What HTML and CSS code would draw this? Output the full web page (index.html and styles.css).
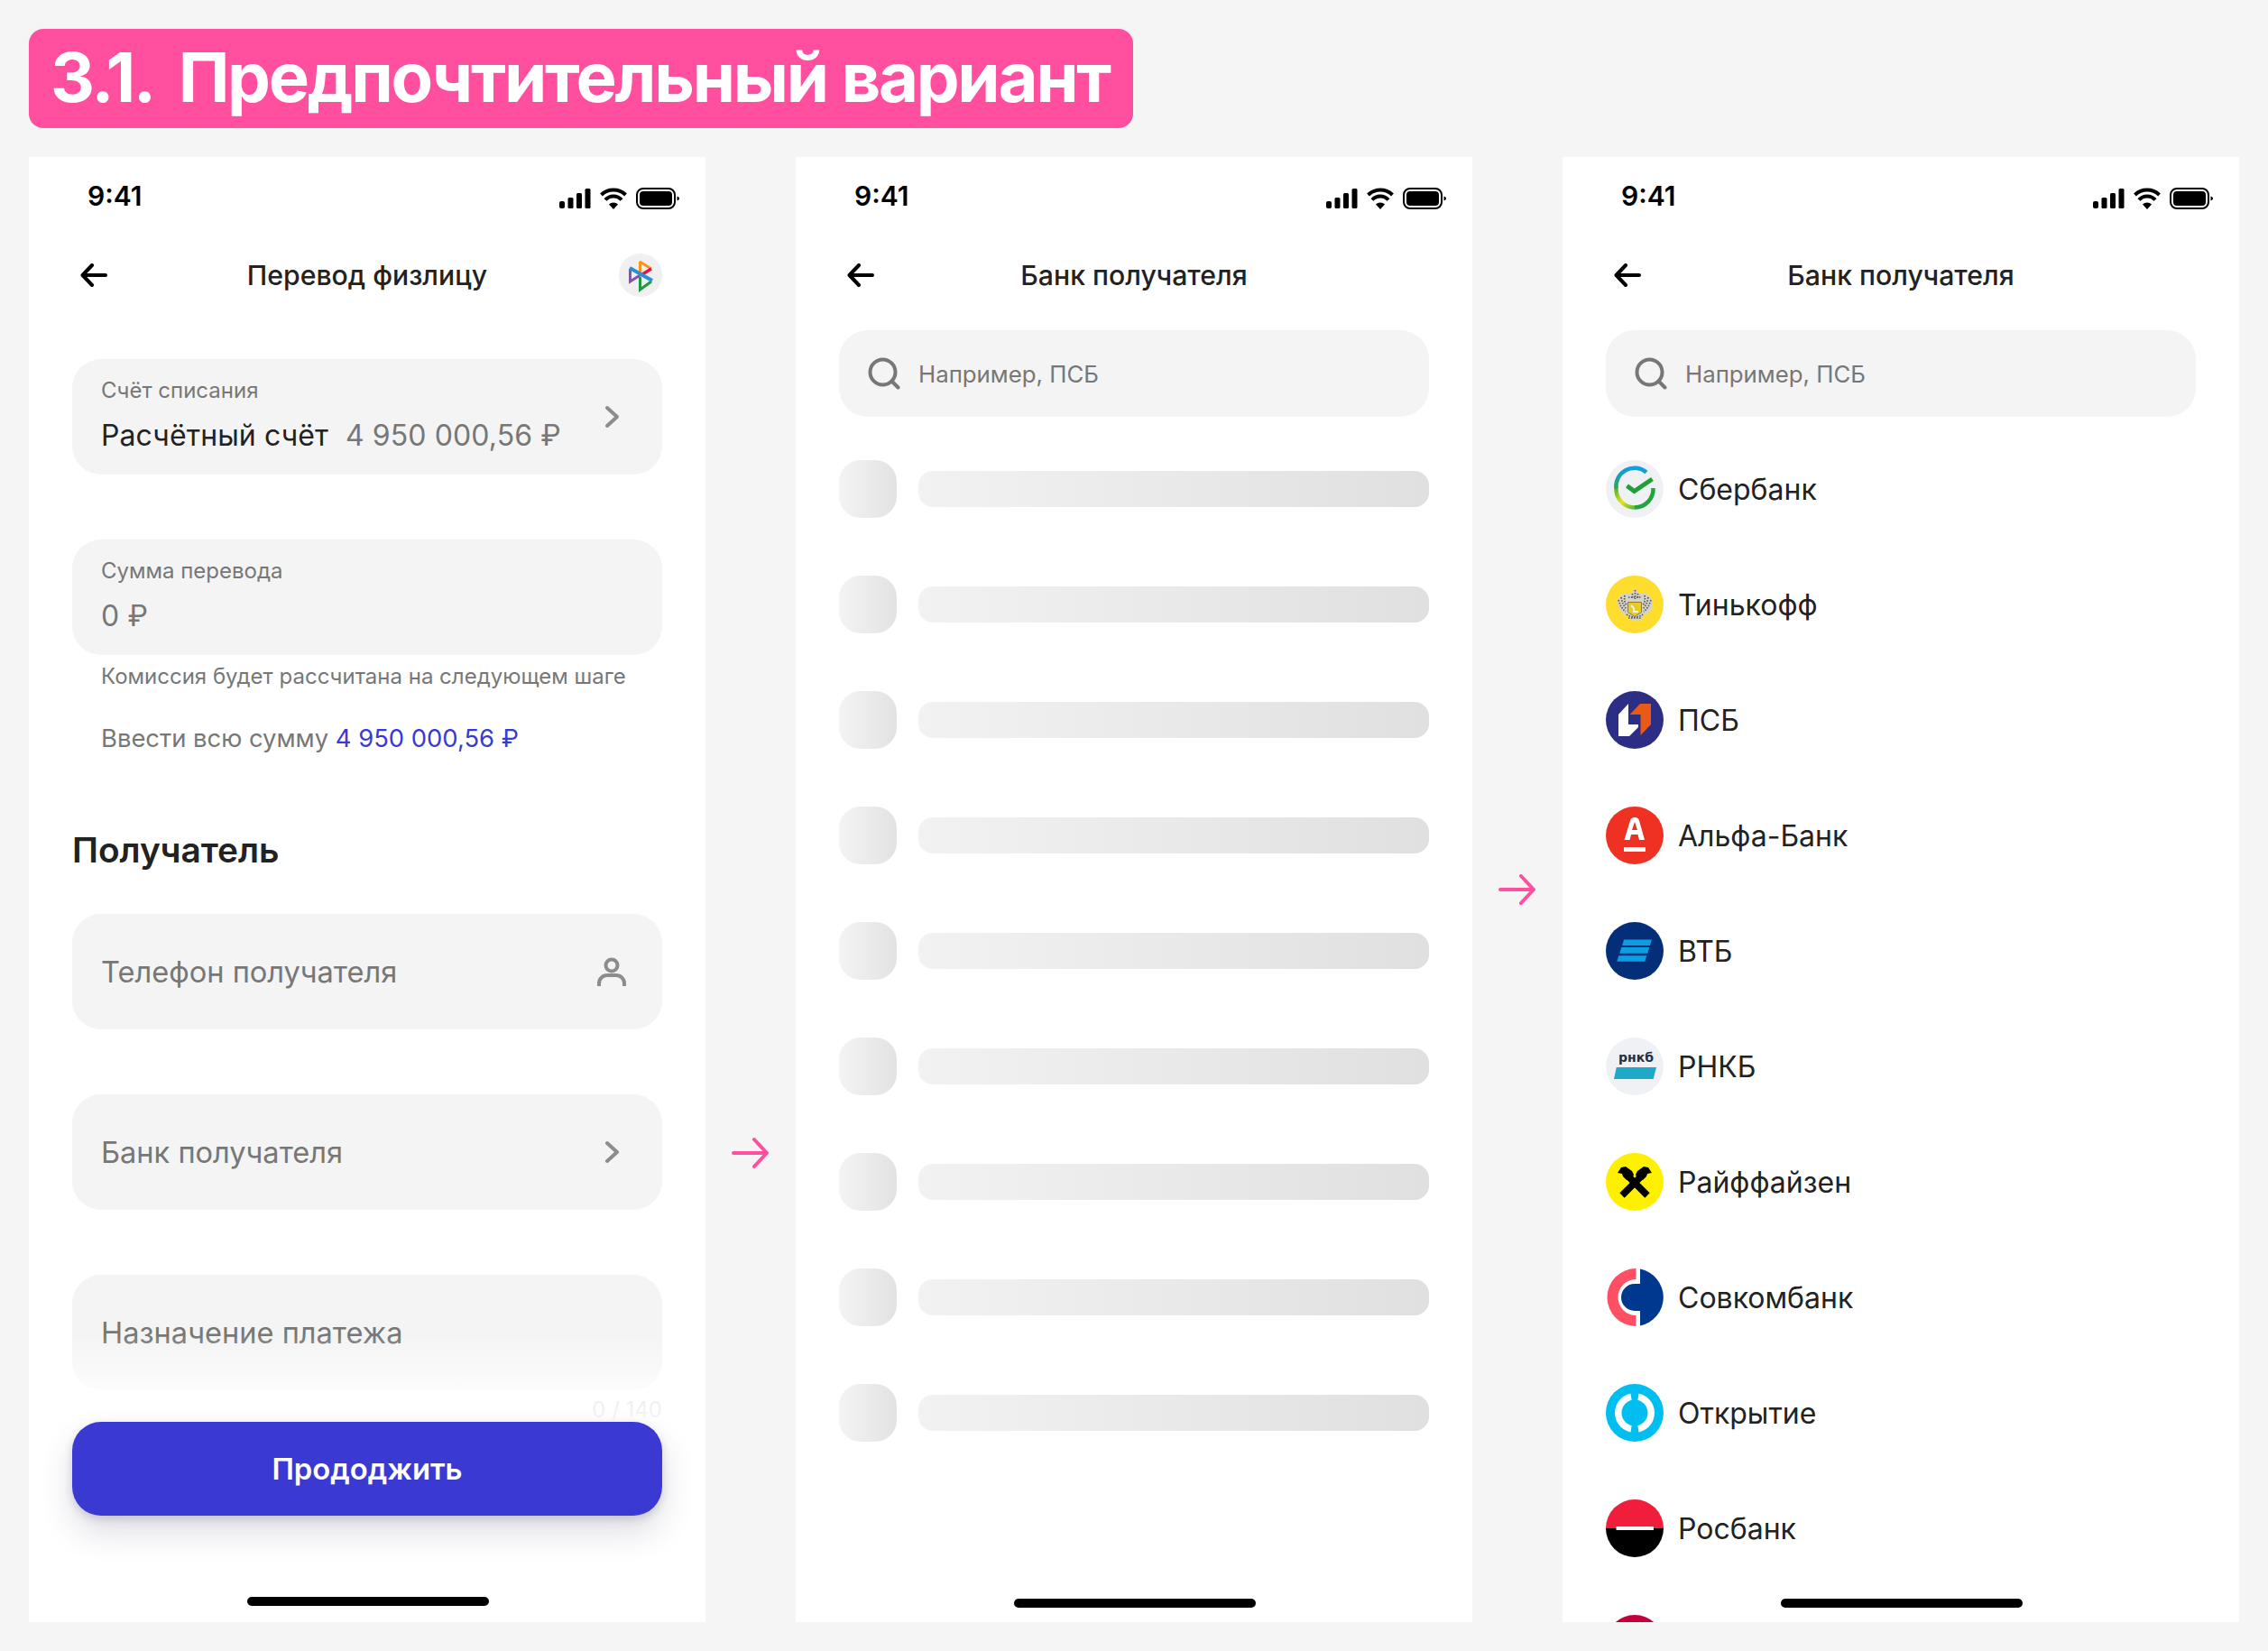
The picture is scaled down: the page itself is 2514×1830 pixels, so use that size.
FILE: index.html
```html
<!DOCTYPE html>
<html lang="ru">
<head>
<meta charset="utf-8">
<title>3.1. Предпочтительный вариант</title>
<link rel="stylesheet" href="styles.css">
</head>
<body>
<svg class="defs" aria-hidden="true">
  <symbol id="status" viewBox="0 0 134 26">
    <rect x="0" y="15" width="6" height="8" rx="2"/><rect x="9.500" y="11" width="6" height="12" rx="1.500"/><rect x="19" y="6" width="6" height="17" rx="1.500"/><rect x="28.500" y="1" width="6" height="22" rx="1.500"/>
    <path d="M46.500 8a19.500 19.500 0 0 1 27 0" fill="none" stroke="#000" stroke-width="4"/>
    <path d="M51 13.500a12 12 0 0 1 18 0" fill="none" stroke="#000" stroke-width="4"/>
    <path d="M55 18.500a7 7 0 0 1 10 0L60 24z"/>
    <rect x="86" y="1" width="42" height="22" rx="7" fill="none" stroke="#000" stroke-width="2"/>
    <rect x="89" y="4" width="36" height="16" rx="4"/>
    <path d="M130.500 9.500c1.500.4 2.500 1.300 2.500 2.500s-1 2.100-2.500 2.500z"/>
  </symbol>
  <symbol id="back" viewBox="0 0 30 26">
    <path d="M28 13H3M13 2 2.500 13 13 24" fill="none" stroke="#000" stroke-width="4" stroke-linecap="round" stroke-linejoin="round"/>
  </symbol>
  <symbol id="chev" viewBox="0 0 32 32">
    <path d="M10 6l11 10-11 10" transform="translate(1)" fill="none" stroke="#8c8c8c" stroke-width="4" stroke-linecap="round" stroke-linejoin="round"/>
  </symbol>
  <symbol id="next" viewBox="0 0 42 34">
    <path d="M2 17h37M25 2l14 15-14 15" fill="none" stroke="#ff4f9e" stroke-width="4" stroke-linecap="round" stroke-linejoin="round"/>
  </symbol>
  <symbol id="search" viewBox="0 0 36 36">
    <circle cx="16.500" cy="16.500" r="14" fill="none" stroke="#777" stroke-width="4"/>
    <path d="M26.500 26.500l7 7" stroke="#777" stroke-width="4" stroke-linecap="round"/>
  </symbol>
</svg>

<h1 class="banner"><span class="banner-num">3.1.</span> Предпочтительный вариант</h1>

<main class="flow">
  <section class="phone">
    <div class="status"><span class="time">9:41</span><svg class="status-icons"><use href="#status"/></svg></div>
    <header class="nav">
      <svg class="back"><use href="#back"/></svg>
      <span class="nav-title">Перевод физлицу</span>
      <svg class="avatar" viewBox="0 0 48 48">
        <circle cx="24" cy="24" r="24" fill="#f0f0f0"/>
        <path d="M23.500 9v12" stroke="#f7941d" stroke-width="3" fill="none"/>
        <path d="M23 9l13 8" stroke="#f7941d" stroke-width="3" fill="none"/>
        <path d="M36 17l-10 6" stroke="#e8114f" stroke-width="3.500" fill="none"/>
        <path d="M12.500 17v14l11-7" stroke="#8a4fb0" stroke-width="3" fill="none"/>
        <path d="M23.500 26v14L36 31" stroke="#1f9a3c" stroke-width="3" fill="none"/>
        <path d="M12 16l25 14" stroke="#2b8fd6" stroke-width="4" fill="none"/>
      </svg>
    </header>
    <div class="form">
      <div class="field field-row account">
        <div class="account-text">
          <div class="label">Счёт списания</div>
          <div class="value"><span class="dark">Расчётный счёт</span><span class="balance">4 950 000,56 ₽</span></div>
        </div>
        <svg class="icon32"><use href="#chev"/></svg>
      </div>
      <div class="field amount">
        <div class="label">Сумма перевода</div>
        <div class="value">0 ₽</div>
      </div>
      <p class="note">Комиссия будет рассчитана на следующем шаге</p>
      <p class="all">Ввести всю сумму <span class="link">4 950 000,56 ₽</span></p>
      <h2 class="section-title">Получатель</h2>
      <div class="field field-row input first">
        <span>Телефон получателя</span>
        <svg class="icon32" viewBox="0 0 32 32">
          <circle cx="16" cy="9" r="6.500" fill="none" stroke="#8c8c8c" stroke-width="4"/>
          <path d="M2 32v-3a9 9 0 0 1 9-9h10a9 9 0 0 1 9 9v3" fill="none" stroke="#8c8c8c" stroke-width="4"/>
        </svg>
      </div>
      <div class="field field-row input">
        <span>Банк получателя</span>
        <svg class="icon32"><use href="#chev"/></svg>
      </div>
      <div class="field field-row input">
        <span>Назначение платежа</span>
      </div>
      <div class="counter">0 / 140</div>
    </div>
    <div class="footer">
      <div class="fade"></div>
      <button class="cta">Прододжить</button>
    </div>
    <div class="home home-a"></div>
  </section>

  <div class="gutter gutter-a"><svg class="next"><use href="#next"/></svg></div>

  <section class="phone">
    <div class="status"><span class="time">9:41</span><svg class="status-icons"><use href="#status"/></svg></div>
    <header class="nav">
      <svg class="back"><use href="#back"/></svg>
      <span class="nav-title">Банк получателя</span>
      <span></span>
    </header>
    <div class="search"><svg class="search-icon"><use href="#search"/></svg><span>Например, ПСБ</span></div>
    <div class="list">
      <div class="sk-row"><div class="sk-icon"></div><div class="sk-bar"></div></div>
      <div class="sk-row"><div class="sk-icon"></div><div class="sk-bar"></div></div>
      <div class="sk-row"><div class="sk-icon"></div><div class="sk-bar"></div></div>
      <div class="sk-row"><div class="sk-icon"></div><div class="sk-bar"></div></div>
      <div class="sk-row"><div class="sk-icon"></div><div class="sk-bar"></div></div>
      <div class="sk-row"><div class="sk-icon"></div><div class="sk-bar"></div></div>
      <div class="sk-row"><div class="sk-icon"></div><div class="sk-bar"></div></div>
      <div class="sk-row"><div class="sk-icon"></div><div class="sk-bar"></div></div>
      <div class="sk-row"><div class="sk-icon"></div><div class="sk-bar"></div></div>
    </div>
    <div class="home"></div>
  </section>

  <div class="gutter gutter-b"><svg class="next"><use href="#next"/></svg></div>

  <section class="phone">
    <div class="status"><span class="time">9:41</span><svg class="status-icons"><use href="#status"/></svg></div>
    <header class="nav">
      <svg class="back"><use href="#back"/></svg>
      <span class="nav-title">Банк получателя</span>
      <span></span>
    </header>
    <div class="search"><svg class="search-icon"><use href="#search"/></svg><span>Например, ПСБ</span></div>
    <div class="list">
      <div class="bank">
        <svg class="logo" viewBox="0 0 64 64">
          <defs>
            <linearGradient id="sa" x1="0" y1="0" x2="0" y2="1"><stop offset="0" stop-color="#0f9fe6"/><stop offset="1" stop-color="#2aa84a"/></linearGradient>
            <linearGradient id="sb" x1="0" y1="0" x2="1" y2="1"><stop offset="0" stop-color="#5cb52f"/><stop offset=".5" stop-color="#e6e51a"/><stop offset="1" stop-color="#5fbb2f"/></linearGradient>
          </defs>
          <circle cx="32" cy="32" r="32" fill="#eff1f5"/>
          <path d="M45 13.500A20.500 20.500 0 0 0 11.500 32" fill="none" stroke="url(#sa)" stroke-width="4.500"/>
          <path d="M11.500 32A20.500 20.500 0 0 0 32 52.500" fill="none" stroke="url(#sb)" stroke-width="4.500"/>
          <path d="M32 52.500A20.500 20.500 0 0 0 52.500 31" fill="none" stroke="#22a53c" stroke-width="4.500"/>
          <path d="M23.500 28.500l8 6 20-13.500" fill="none" stroke="#21a038" stroke-width="5"/>
        </svg>
        <span>Сбербанк</span>
      </div>
      <div class="bank">
        <svg class="logo" viewBox="0 0 64 64">
          <circle cx="32" cy="32" r="32" fill="#ffdd2d"/>
          <path d="M31 15h3l2 5 6-1 6 3 4 7-1 8-5 6-4 1-3 5H27l-3-5-4-1-5-6-3-8 4-7 6-3 6 1z" fill="#d5d3c8"/>
          <g fill="none" stroke="#55554e" stroke-width="1.700" stroke-dasharray="1.500 1.500">
            <path d="M32.500 16v10M29.500 20v6M35.500 20v6"/>
            <path d="M14 27c2 6 4 10 8 13M17 24c1 6 3 10 6 13M21 22c-1 4 0 8 2 11"/>
            <path d="M50 27c-2 6-4 10-8 13M47 24c-1 6-3 10-6 13M43 22c1 4 0 8-2 11"/>
            <path d="M25 24h14M23 43c5 4 13 4 18 0M25 47h14"/>
          </g>
          <path d="M24.500 29.500h15v11l-7.500 5-7.500-5z" fill="#e8cb25" stroke="#7d7a5c" stroke-width="1"/>
          <path d="M28 33l3 3v4h5" fill="none" stroke="#f6f4e4" stroke-width="1.800"/>
        </svg>
        <span>Тинькофф</span>
      </div>
      <div class="bank">
        <svg class="logo" viewBox="0 0 64 64">
          <circle cx="32" cy="32" r="32" fill="#2c2e85"/>
          <path d="M14 26 25 14v23h11v3L26 50H14z" fill="#fff"/>
          <path d="M26.500 26 38 14h12v23L38.500 49V26z" fill="#e85a16"/>
        </svg>
        <span>ПСБ</span>
      </div>
      <div class="bank">
        <svg class="logo" viewBox="0 0 64 64">
          <circle cx="32" cy="32" r="32" fill="#ef3124"/>
          <path fill="#fff" fill-rule="evenodd" d="M27 15.500c.6-2.200 1.900-3.500 5-3.500s4.300 1.300 5 3.500L43 37h-6l-1.500-6H28l-1.500 6h-6zM32 17l-3 9h6z"/>
          <rect x="20" y="45" width="24" height="5" fill="#fff"/>
        </svg>
        <span>Альфа-Банк</span>
      </div>
      <div class="bank">
        <svg class="logo" viewBox="0 0 64 64">
          <circle cx="32" cy="32" r="32" fill="#042f78"/>
          <path fill="#0a9fe3" d="M20 19.500h31L49 26H18.200zM17.300 28h31L46.300 34.700H15.300zM14.300 37.200h31L43.300 43.700H12.300z"/>
        </svg>
        <span>ВТБ</span>
      </div>
      <div class="bank">
        <svg class="logo" viewBox="0 0 64 64">
          <circle cx="32" cy="32" r="32" fill="#eff1f5"/>
          <text class="rnkb" x="33.500" y="27" text-anchor="middle">рнкб</text>
          <path fill="#1fa9c8" d="M11.700 33H56l-3.300 13H9z"/>
        </svg>
        <span>РНКБ</span>
      </div>
      <div class="bank">
        <svg class="logo" viewBox="0 0 64 64">
          <circle cx="32" cy="32" r="32" fill="#fff000"/>
          <path d="M23 24l23 23M41 24 18 47" stroke="#000" stroke-width="7.500" fill="none"/>
          <path d="M13 22l4-6 5-1 7 5 2 4-2 5-4-2-2 3-4-4-1-3z"/>
          <path d="M51 22l-4-6-5-1-7 5-2 4 2 5 4-2 2 3 4-4 1-3z"/>
        </svg>
        <span>Райффайзен</span>
      </div>
      <div class="bank">
        <svg class="logo" viewBox="0 0 64 64">
          <path fill="#ff4f64" d="M33.500 0A32 32 0 0 0 33.500 64V52A20 20 0 0 1 33.500 12z"/>
          <path fill="#00388f" d="M38 .6A32 32 0 0 1 38 63.400V47H32A15 15 0 0 1 32 17h6z"/>
        </svg>
        <span>Совкомбанк</span>
      </div>
      <div class="bank">
        <svg class="logo" viewBox="0 0 64 64">
          <circle cx="32" cy="32" r="32" fill="#00bef0"/>
          <circle cx="32" cy="32" r="22" fill="#fff"/>
          <circle cx="32" cy="32" r="14.500" fill="#00bef0"/>
          <path fill="#00bef0" d="M27 8h10l-2 12h-6zM29 44h6l2 12H27z"/>
        </svg>
        <span>Открытие</span>
      </div>
      <div class="bank">
        <svg class="logo" viewBox="0 0 64 64">
          <path fill="#f01e3c" d="M0 32a32 32 0 0 1 64 0z"/>
          <path fill="#000" d="M0 32a32 32 0 0 0 64 0z"/>
          <rect x="11.500" y="30" width="41.500" height="4" fill="#f3f3f3"/>
        </svg>
        <span>Росбанк</span>
      </div>
      <div class="bank">
        <svg class="logo" viewBox="0 0 64 64"><circle cx="32" cy="32" r="32" fill="#c4003a"/></svg>
      </div>
    </div>
    <div class="home"></div>
  </section>
</main>
</body>
</html>
```
FILE: styles.css
```css
* { box-sizing: border-box; }
html, body { margin: 0; }
body {
  width: 2514px;
  height: 1830px;
  padding: 32px;
  background: #f5f5f5;
  font-family: Inter, "Noto Sans", sans-serif;
  color: #222;
  overflow: hidden;
}
.defs { position: absolute; width: 0; height: 0; }

.banner {
  display: inline-block;
  height: 110px;
  margin: 0 0 32px;
  padding: 0 26px 0 24px;
  background: #ff4f9e;
  border-radius: 16px;
  color: #fff;
  font-size: 76px;
  font-weight: 700;
  line-height: 106px;
  letter-spacing: -2.300px;
  white-space: nowrap;
  vertical-align: top;
}
.banner-num { margin-right: 11px; }

.flow { display: flex; align-items: flex-start; }

.phone {
  position: relative;
  flex: none;
  width: 750px;
  height: 1624px;
  background: #fff;
  overflow: hidden;
}

.gutter { flex: none; width: 100px; display: flex; justify-content: center; }
.gutter-a { padding-top: 1087px; }
.gutter-b { padding-top: 795px; }
.next { width: 42px; height: 34px; }

.status {
  display: flex;
  align-items: flex-start;
  justify-content: space-between;
  height: 88px;
  padding: 24px 28px 0 65px;
}
.time { font-size: 30px; font-weight: 600; line-height: 38px; color: #000; }
.status-icons { width: 134px; height: 26px; margin-top: 10px; }

.nav {
  display: grid;
  grid-template-columns: 1fr auto 1fr;
  align-items: center;
  height: 86px;
  padding: 0 48px;
}
.back { width: 30px; height: 26px; margin-left: 9px; }
.nav-title { font-size: 30.200px; font-weight: 500; line-height: 40px; color: #222; }
.avatar { width: 48px; height: 48px; justify-self: end; }

.form { padding: 50px 48px 0; }

.field {
  height: 128px;
  background: #f4f4f4;
  border-radius: 32px;
  color: #777;
}
.field-row {
  display: flex;
  align-items: center;
  justify-content: space-between;
  padding: 0 40px 0 32px;
}
.account { margin-bottom: 72px; }
.account-text { padding-bottom: 4px; }
.amount { padding: 19px 32px 0; }
.label { font-size: 24px; line-height: 32px; color: #777; }
.value { margin-top: 14px; font-size: 32px; line-height: 40px; color: #777; white-space: nowrap; letter-spacing: .1px; }
.dark { color: #222; margin-right: 19px; }
.balance { color: #777; }
.icon32 { flex: none; width: 32px; height: 32px; }

.note { margin: 8px 0 0 32px; font-size: 24px; line-height: 32px; color: #777; }
.all { margin: 34px 0 0 32px; font-size: 27.400px; line-height: 36px; color: #777; }
.link { color: #3a3ad2; }
.section-title { margin: 82px 0 0; font-size: 38.800px; font-weight: 600; line-height: 48px; color: #222; }

.input { margin-top: 72px; font-size: 32.600px; }
.input.first { margin-top: 47px; }
.counter { margin-top: 6px; text-align: right; font-size: 24px; line-height: 32px; color: #aaa; }

.footer {
  position: absolute;
  left: 0;
  right: 0;
  top: 1306px;
  display: flex;
  flex-direction: column;
  align-items: center;
}
.fade {
  width: 100%;
  height: 96px;
  background: linear-gradient(to bottom, rgba(255,255,255,0) 0%, rgba(255,255,255,.75) 60%, rgba(255,255,255,.9) 100%);
}
.cta {
  width: 654px;
  height: 104px;
  border: 0;
  border-radius: 32px;
  background: #3a3ad2;
  color: #fff;
  font-family: inherit;
  font-size: 32.800px;
  font-weight: 600;
  box-shadow: 0 4px 10px rgba(50,50,90,.18), 0 18px 36px rgba(50,50,90,.16);
}

.home {
  position: absolute;
  left: 242px;
  top: 1598px;
  width: 268px;
  height: 10px;
  border-radius: 5px;
  background: #000;
}
.home-a { top: 1596px; }

.search {
  display: flex;
  align-items: center;
  gap: 20px;
  height: 96px;
  margin: 18px 48px 0;
  padding: 0 32px;
  background: #f4f4f4;
  border-radius: 32px;
  font-size: 25.800px;
  color: #777;
}
.search-icon { flex: none; width: 36px; height: 36px; }

.list { display: flex; flex-direction: column; gap: 64px; padding: 48px 48px 0; }

.sk-row { display: flex; align-items: center; gap: 24px; height: 64px; }
.sk-icon {
  flex: none;
  width: 64px;
  height: 64px;
  border-radius: 24px;
  background: linear-gradient(90deg, #f4f4f4, #e2e2e2);
}
.sk-bar {
  flex: 1;
  height: 40px;
  border-radius: 16px;
  background: linear-gradient(90deg, #f2f2f2, #e0e0e0);
}

.bank { display: flex; align-items: center; gap: 16px; height: 64px; font-size: 32px; color: #222; flex: none; }
.logo { flex: none; width: 64px; height: 64px; }
.rnkb { font-family: "DejaVu Sans", sans-serif; font-size: 14px; font-weight: 700; fill: #232f45; }
```
